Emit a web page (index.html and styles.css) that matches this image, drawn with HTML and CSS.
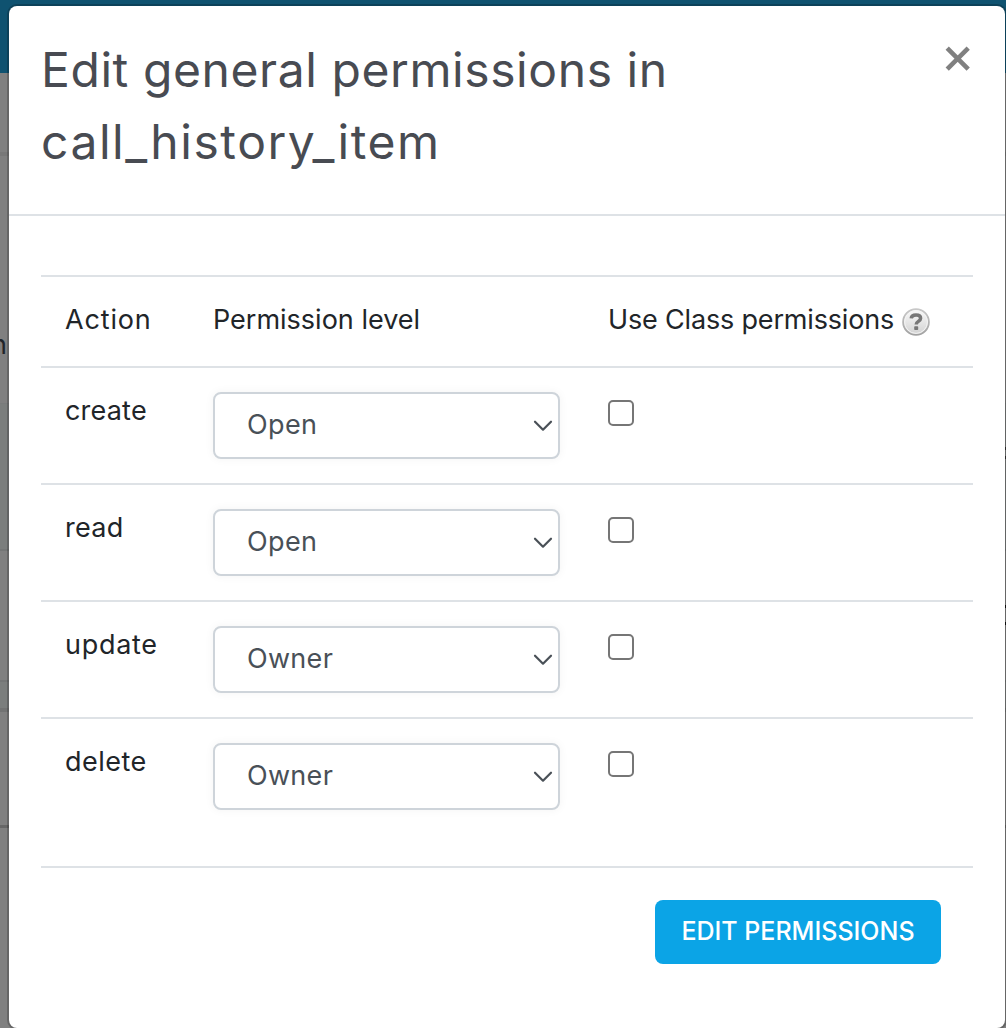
FILE: index.html
```html
<!DOCTYPE html>
<html lang="en">
<head>
<meta charset="utf-8">
<title>Edit general permissions</title>
<link rel="stylesheet" href="styles.css">
</head>
<body>
<div class="page" aria-hidden="true">
  <div class="page-bar"></div>
  <div class="page-section head"></div>
  <div class="page-section intro"><span class="page-text">n</span></div>
  <div class="page-section tinted"></div>
  <div class="page-section plain"></div>
  <div class="page-section band"></div>
  <div class="page-section body"></div>
</div>
<div class="marks" aria-hidden="true"><i class="mark soft"></i><i class="mark"></i></div>
<main class="modal" role="dialog" aria-labelledby="title">
  <header class="modal-header">
    <h1 class="title" id="title"><span class="title-top">Edit general permissions in</span><br><span class="title-name">call_history_item</span></h1>
    <button class="close" aria-label="Close"><svg width="26" height="26" viewBox="0 0 26 26"><path d="M2.2 2.2 23.2 23.2M23.2 2.2 2.2 23.2" stroke="#808080" stroke-width="4.6" fill="none"/></svg></button>
  </header>
  <section class="modal-body">
    <div class="table">
      <div class="row head-row">
        <span class="t-action">Action</span>
        <span class="t-level">Permission level</span>
        <span class="help-cell"><span class="t-class">Use Class permissions</span>
          <svg class="help" width="28" height="28" viewBox="0 0 28 28"><defs><linearGradient id="g" x1="0" y1="0" x2="0" y2="1"><stop offset="0" stop-color="#fafafa"/><stop offset="1" stop-color="#d2d2d2"/></linearGradient><linearGradient id="r" x1="0" y1="0" x2="0" y2="1"><stop offset="0" stop-color="#c8c8c8"/><stop offset="1" stop-color="#a2a2a2"/></linearGradient></defs><circle cx="14" cy="14" r="12.9" fill="url(#g)" stroke="url(#r)" stroke-width="1.8"/><circle cx="14" cy="14" r="11.4" fill="none" stroke="#f4f4f4" stroke-width="1"/><path d="M9.2 10.4C9.5 7.7 11.4 7.1 14 7.1c2.8 0 4.6 1.1 4.6 3.2 0 3.2-4.4 2.9-4.4 6.1" fill="none" stroke="#777" stroke-width="3.5"/><rect x="12.2" y="18.2" width="4" height="3.8" rx=".8" fill="#777"/></svg></span>
      </div>
      <div class="row"><span class="t-create">create</span><button class="select"><span class="v-open">Open</span><svg class="chevron" width="20" height="12" viewBox="0 0 20 12"><path d="M2 1.7 10 9.7 18 1.7"/></svg></button><input class="check" type="checkbox" aria-label="create"></div>
      <div class="row"><span class="t-read">read</span><button class="select"><span class="v-open">Open</span><svg class="chevron" width="20" height="12" viewBox="0 0 20 12"><path d="M2 1.7 10 9.7 18 1.7"/></svg></button><input class="check" type="checkbox" aria-label="read"></div>
      <div class="row"><span class="t-update">update</span><button class="select"><span class="v-owner">Owner</span><svg class="chevron" width="20" height="12" viewBox="0 0 20 12"><path d="M2 1.7 10 9.7 18 1.7"/></svg></button><input class="check" type="checkbox" aria-label="update"></div>
      <div class="row"><span class="t-delete">delete</span><button class="select"><span class="v-owner">Owner</span><svg class="chevron" width="20" height="12" viewBox="0 0 20 12"><path d="M2 1.7 10 9.7 18 1.7"/></svg></button><input class="check" type="checkbox" aria-label="delete"></div>
    </div>
    <footer class="modal-footer"><button class="submit"><span class="t-submit">EDIT PERMISSIONS</span></button></footer>
  </section>
</main>
</body>
</html>
```
FILE: styles.css
```css
* { box-sizing: border-box; }
body {
  margin: 0;
  height: 1028px;
  overflow: hidden;
  position: relative;
  background: #808080;
  font-family: Inter, "Liberation Sans", sans-serif;
  font-size: 27px;
  color: #212529;
}
button { font: inherit; color: inherit; }

/* dimmed page behind the dialog */
.page { position: absolute; inset: 0; overflow: hidden; }
.page-bar { height: 73px; background: #0f5270; }
.page-section { border-bottom: 2px solid #747676; }
.page-section.head { height: 83px; border-bottom: 4px solid #787878; }
.page-section.intro { height: 248px; padding-top: 171px; border-bottom: 1px solid #797b7b; }
.page-section.tinted { height: 147px; background: #7b7e7d; }
.page-section.plain { height: 131px; }
.page-section.band { height: 30px; background: #7b7e7d; border-bottom: 4px solid #727373; }
.page-section.body { height: 116px; border-bottom: 3px solid #676767; }
.page-text { display: block; margin-left: -9px; line-height: 36px; color: #212529; }
.marks { position: absolute; left: 1005px; top: 447px; width: 1px; height: 178px; display: flex; flex-direction: column; justify-content: space-between; }
.mark { height: 20px; border-top: 3px solid #111; border-bottom: 3px solid #111; }
.mark.soft { height: 12px; border-color: #333; }

/* dialog */
.modal {
  position: absolute;
  left: 9px;
  top: 6px;
  width: 996px;
  height: 1022px;
  background: #fff;
  border-radius: 8px;
  box-shadow: 0 0 0 2px rgba(0, 0, 0, .2);
}
.modal-header {
  height: 210px;
  padding: 28px 34px 0 32px;
  display: flex;
  justify-content: space-between;
  align-items: flex-start;
  border-bottom: 2px solid #dee2e6;
}
.title { margin: 0; font-size: 48px; line-height: 72px; font-weight: 400; color: #484b52; white-space: nowrap; }
.title-top { letter-spacing: .58px; }
.title-name { letter-spacing: 1.55px; }
.close { margin-top: 12px; padding: 0; border: 0; background: none; display: flex; }
.modal-body { padding: 59px 32px 0; }
.table { border-bottom: 2px solid #dee2e6; padding-bottom: 32px; }
.row {
  display: grid;
  grid-template-columns: 148px 395px 1fr;
  align-items: start;
  border-top: 2px solid #dee2e6;
  padding: 24px 0 24px 24px;
  height: 117px;
  line-height: 38px;
  white-space: nowrap;
}
.head-row { height: 91px; }
.t-action { letter-spacing: .85px; }
.t-class { letter-spacing: -.17px; }
.t-create { letter-spacing: .2px; }
.t-read { letter-spacing: .3px; }
.t-update { letter-spacing: .7px; }
.t-delete { letter-spacing: .5px; }
.v-open { letter-spacing: .4px; }
.v-owner { letter-spacing: .3px; }
.help-cell { display: flex; align-items: flex-start; }
.help { margin: 7px 0 0 auto; }
.head-row .help-cell { width: 322px; }
.select {
  width: 347px;
  height: 67px;
  padding: 0 5px 1px 32px;
  display: flex;
  align-items: center;
  justify-content: space-between;
  text-align: left;
  color: #495057;
  background: #fff;
  border: 2px solid #ced4da;
  border-radius: 8px;
  box-shadow: 0 0 10px rgba(0, 0, 0, .05);
}
.chevron { margin-top: 2px; fill: none; stroke: #495057; stroke-width: 2.2; stroke-linejoin: round; stroke-linecap: round; }
.check { appearance: none; width: 26px; height: 26px; margin: 8px 0 0; border: 2px solid #767676; border-radius: 5px; background: #fff; }
.modal-footer { display: flex; justify-content: flex-end; padding: 32px 32px 0; }
.submit {
  width: 286px;
  height: 64px;
  padding: 0 0 2px;
  border: 0;
  border-radius: 8px;
  background: #0ba4e6;
  color: #fff;
  font-size: 25px;
  font-weight: 500;
  white-space: nowrap;
}
```
